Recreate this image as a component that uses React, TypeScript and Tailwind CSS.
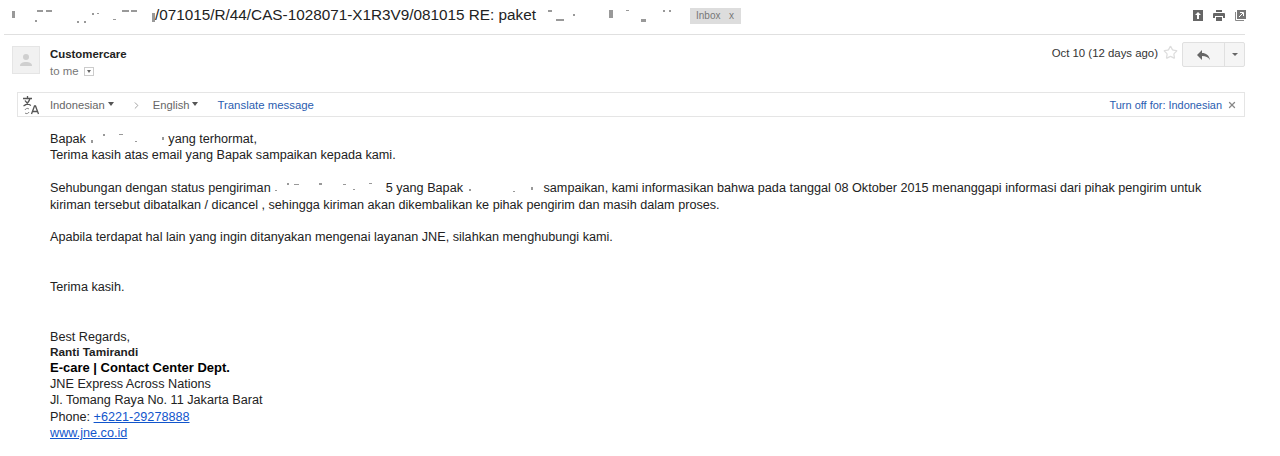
import { ChevronRight, Star, X } from "lucide-react";

// leftovers of the blurred-out text: [x, y, w, h]
const Redacted = ({ width, height, marks }: { width: number; height: number; marks: number[][] }) => {
  return (
    <svg width={width} height={height} className="inline-block align-baseline">
      {marks.map((m, i) => (
        <rect key={i} x={m[0]} y={m[1]} width={m[2]} height={m[3]} fill="#555" opacity="0.6" />
      ))}
    </svg>
  );
};

const Caret = () => {
  return <span className="inline-block w-0 h-0 ml-[3px] mb-[2px] border-x-[3.5px] border-x-transparent border-t-[4px] border-t-[#555]" />;
};

const Avatar = () => {
  return (
    <div className="w-[28px] h-[28px] bg-[#f1f1f1] border border-[#e5e5e5] flex items-center justify-center">
      <svg width="12" height="14" viewBox="0 0 12 14">
        <circle cx="6" cy="4" r="3" fill="#cfcfcf" />
        <path d="M0 13c0-3 2.500-4 6-4s6 1 6 4z" fill="#cfcfcf" />
      </svg>
    </div>
  );
};

const TranslateIcon = () => {
  return (
    <svg width="18" height="20" viewBox="0 0 18 20" fill="none">
      <path d="M1 3.500h9M5.500 1v2.500M8 3.500C7 7 4.500 9.500 1.500 11M3 5.500c1 2 3.500 4 6 5" stroke="#555" strokeWidth="1.300" />
      <path d="M3 15a2.500 2.500 0 0 1 4-1M7 17a2.500 2.500 0 0 1-4 1" stroke="#888" strokeWidth="1" />
      <path d="M9.500 19l3-8h1l3 8M10.800 16.500h4.400" stroke="#555" strokeWidth="1.300" />
    </svg>
  );
};

const SubjectBar = () => {
  return (
    <div className="flex items-center h-[35px] ml-[4px] mr-[35px] border-b border-[#e0e0e0] pb-[3px]">
      <Redacted
        width={151}
        height={24}
        marks={[[8, 7, 3, 7], [33, 6, 6, 2], [42, 6, 6, 2], [31, 16, 2, 2], [73, 17, 2, 2], [80, 17, 2, 2], [88, 9, 2, 2], [93, 9, 2, 1], [109, 15, 3, 1], [118, 6, 7, 2], [127, 6, 6, 2], [148, 9, 3, 9]]}
      />
      <span className="text-[15.300px] text-[#222]">/071015/R/44/CAS-1028071-X1R3V9/081015 RE: paket</span>
      <Redacted
        width={154}
        height={24}
        marks={[[12, 6, 4, 2], [20, 15, 8, 2], [37, 10, 2, 2], [73, 6, 4, 8], [90, 6, 3, 1], [105, 15, 5, 3], [127, 6, 2, 2], [133, 6, 2, 2]]}
      />
      <div className="flex items-center justify-between w-[51px] h-[16px] bg-[#dddddd] px-[6px] text-[10px] text-[#777]">
        <span>Inbox</span>
        <span className="mr-[1px]">x</span>
      </div>
      <div className="ml-auto mr-[-1px] flex items-center gap-[10px] text-[#666]">
        <svg width="10" height="11" viewBox="0 0 10 11">
          <rect width="10" height="11" fill="#666" />
          <path d="M5 2L2 5h2v4h2V5h2z" fill="#fff" />
        </svg>
        <svg width="12" height="11" viewBox="0 0 12 11">
          <path d="M3 0h6v2H3zM1 3h10a1 1 0 0 1 1 1v4H10V6H2v2H0V4a1 1 0 0 1 1-1zM3 7h6v4H3z" fill="#666" />
        </svg>
        <svg width="11" height="11" viewBox="0 0 11 11" fill="none">
          <path d="M0.500 2v8.500H9" stroke="#888" />
          <rect x="2" y="0" width="9" height="9" fill="#777" />
          <path d="M4 7l4-4M5 2.500h3.500V6" stroke="#fff" />
        </svg>
      </div>
    </div>
  );
};

const MessageHeader = () => {
  return (
    <div className="flex ml-[12px] mr-[35px] mt-[11px] h-[45px]">
      <Avatar />
      <div className="ml-[10px] flex flex-col text-[11.400px]">
        <span className="font-bold text-[#222] leading-[16px]">Customercare</span>
        <span className="text-[#777] leading-[16px] mt-[1px] flex items-center">
          to me
          <span className="ml-[5px] w-[10px] h-[9px] border border-[#ccc] flex items-center justify-center">
            <span className="w-0 h-0 border-x-[2.500px] border-x-transparent border-t-[3px] border-t-[#666]" />
          </span>
        </span>
      </div>
      <div className="ml-auto flex items-start">
        <span className="text-[11.400px] text-[#333] leading-[16px] mt-[-1px]">Oct 10 (12 days ago)</span>
        <Star size={15} className="ml-[5px] mt-[-1px] text-[#ddd]" />
        <div className="ml-[4px] mt-[-4px] flex h-[25px] border border-[#e0e0e0] rounded-[2px] bg-[#f5f5f5]">
          <div className="w-[42px] flex items-center justify-center border-r border-[#e0e0e0]">
            <svg width="13" height="10" viewBox="0 0 13 10">
              <path d="M0 5l5-5v3c4 0 7 2 8 7-2-3-4-4-8-4v4z" fill="#666" />
            </svg>
          </div>
          <div className="w-[19px] flex items-center justify-center">
            <span className="w-0 h-0 border-x-[3px] border-x-transparent border-t-[3px] border-t-[#666]" />
          </div>
        </div>
      </div>
    </div>
  );
};

const TranslateBar = () => {
  return (
    <div className="flex items-center h-[25px] ml-[17px] mr-[35px] mt-[1px] pt-[1px] border border-[#e5e5e5] text-[11.200px]">
      <div className="ml-[4px] w-[28px]">
        <TranslateIcon />
      </div>
      <span className="text-[#666]">Indonesian</span>
      <Caret />
      <ChevronRight size={11} className="ml-[17px] text-[#999]" />
      <span className="ml-[11px] text-[#666]">English</span>
      <Caret />
      <span className="ml-[19px] pt-[1px] text-[11.400px] text-[#2a5db0]">Translate message</span>
      <span className="ml-auto text-[10.950px] text-[#2a5db0]">Turn off for: Indonesian</span>
      <X size={10} strokeWidth={3} className="ml-[5px] mr-[7px] text-[#888]" />
    </div>
  );
};

const Body = () => {
  const line = "h-[16.400px]";
  return (
    <div className="ml-[50px] mr-[35px] mt-[14px] text-[12.650px] leading-[16.400px] text-[#222]">
      <p>
        Bapak
        <Redacted width={79} height={10} marks={[[5, 7, 2, 3], [17, 1, 2, 2], [33, 1, 4, 1], [49, 8, 2, 1], [76, 4, 2, 3]]} />
        {" "}yang terhormat,
      </p>
      <p>Terima kasih atas email yang Bapak sampaikan kepada kami.</p>
      <div className={line} />
      <p>
        Sehubungan dengan status pengiriman
        <Redacted width={115} height={10} marks={[[4, 8, 2, 1], [16, 1, 2, 2], [23, 2, 5, 1], [48, 1, 3, 2], [72, 2, 3, 1], [82, 7, 2, 1], [98, 1, 3, 1]]} />
        5 yang Bapak
        <Redacted width={77} height={10} marks={[[6, 7, 2, 2], [50, 9, 2, 1], [68, 5, 2, 3]]} />
        {" "}sampaikan, kami informasikan bahwa pada tanggal 08 Oktober 2015 menanggapi informasi dari pihak pengirim untuk
      </p>
      <p>kiriman tersebut dibatalkan / dicancel , sehingga kiriman akan dikembalikan ke pihak pengirim dan masih dalam proses.</p>
      <div className={line} />
      <p>Apabila terdapat hal lain yang ingin ditanyakan mengenai layanan JNE, silahkan menghubungi kami.</p>
      <div className={line} />
      <div className={line} />
      <p>Terima kasih.</p>
      <div className={line} />
      <div className={line} />
      <p className="mt-[1px]">Best Regards,</p>
      <p className="text-[11.800px] leading-[15px] font-bold">Ranti Tamirandi</p>
      <p className="text-[13px] leading-[15.500px] font-bold text-black">E-care | Contact Center Dept.</p>
      <p>JNE Express Across Nations</p>
      <p>Jl. Tomang Raya No. 11 Jakarta Barat</p>
      <p>
        Phone: <a className="text-[#1155cc] underline">+6221-29278888</a>
      </p>
      <p>
        <a className="text-[#1155cc] underline">www.jne.co.id</a>
      </p>
    </div>
  );
};

export default function App() {
  return (
    <div className="w-[1280px] h-[456px] bg-white overflow-hidden font-['Liberation_Sans',Arial,sans-serif]">
      <SubjectBar />
      <MessageHeader />
      <TranslateBar />
      <Body />
    </div>
  );
}
